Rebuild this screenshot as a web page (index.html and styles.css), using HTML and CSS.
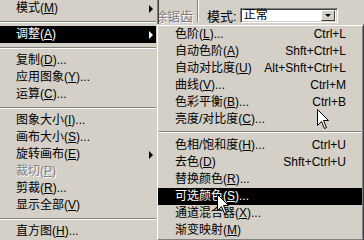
FILE: index.html
```html
<!DOCTYPE html>
<html lang="zh-CN">
<head>
  <meta charset="utf-8"/>
  <title>调整菜单</title>
  <link rel="stylesheet" href="styles.css">
</head>
<body>
  <div class="options-bar">
    <span class="opt-label disabled">消除锯齿</span>
    <span class="vsep"></span>
    <span class="opt-label">模式:</span>
    <div class="combo">
      <span class="combo-text">正常</span>
      <span class="combo-btn"><span class="tri-down"></span></span>
    </div>
  </div>

  <!-- image menu -->
  <div class="menu main-menu">
    <div class="item"><span class="label">模式(<u>M</u>)</span><span class="arrow"></span></div>
    <div class="sep"></div>
    <div class="item active"><span class="label">调整(<u>A</u>)</span><span class="arrow"></span></div>
    <div class="sep"></div>
    <div class="item"><span class="label">复制(<u>D</u>)...</span></div>
    <div class="item"><span class="label">应用图象(<u>Y</u>)...</span></div>
    <div class="item"><span class="label">运算(<u>C</u>)...</span></div>
    <div class="sep"></div>
    <div class="item"><span class="label">图象大小(<u>I</u>)...</span></div>
    <div class="item"><span class="label">画布大小(<u>S</u>)...</span></div>
    <div class="item"><span class="label">旋转画布(<u>E</u>)</span><span class="arrow"></span></div>
    <div class="item disabled"><span class="label">裁切(<u>P</u>)</span></div>
    <div class="item"><span class="label">剪裁(<u>R</u>)...</span></div>
    <div class="item"><span class="label">显示全部(<u>V</u>)</span></div>
    <div class="sep"></div>
    <div class="item"><span class="label">直方图(<u>H</u>)...</span></div>
  </div>

  <!-- adjustments submenu -->
  <div class="menu sub-menu">
    <div class="item"><span class="label">色阶(<u>L</u>)...</span><span class="key">Ctrl+L</span></div>
    <div class="item"><span class="label">自动色阶(<u>A</u>)</span><span class="key">Shft+Ctrl+L</span></div>
    <div class="item"><span class="label">自动对比度(<u>U</u>)</span><span class="key">Alt+Shft+Ctrl+L</span></div>
    <div class="item"><span class="label">曲线(<u>V</u>)...</span><span class="key">Ctrl+M</span></div>
    <div class="item"><span class="label">色彩平衡(<u>B</u>)...</span><span class="key">Ctrl+B</span></div>
    <div class="item"><span class="label">亮度/对比度(<u>C</u>)...</span></div>
    <div class="sep"></div>
    <div class="item"><span class="label">色相/饱和度(<u>H</u>)...</span><span class="key">Ctrl+U</span></div>
    <div class="item"><span class="label">去色(<u>D</u>)</span><span class="key">Shft+Ctrl+U</span></div>
    <div class="item"><span class="label">替换颜色(<u>R</u>)...</span></div>
    <div class="item active"><span class="label">可选颜色(<u>S</u>)...</span></div>
    <div class="item"><span class="label">通道混合器(<u>X</u>)...</span></div>
    <div class="item"><span class="label">渐变映射(<u>M</u>)</span></div>
  </div>

  <svg class="cursor cursor-one" width="13" height="21" viewBox="0 0 13 21">
    <path d="M0.5 0.5 V16.5 L4.5 12.5 L7.5 19.5 L9.5 18.5 L6.5 11.5 H11.5 Z" fill="#fff" stroke="#000" stroke-width="1"/>
  </svg>
  <svg class="cursor cursor-two" width="13" height="21" viewBox="0 0 13 21">
    <path d="M0.5 0.5 V16.5 L4.5 12.5 L7.5 19.5 L9.5 18.5 L6.5 11.5 H11.5 Z" fill="#fff" stroke="#000" stroke-width="1"/>
  </svg>
</body>
</html>
```

FILE: styles.css
```css
body {
  margin: 0;
  width: 364px;
  height: 240px;
  overflow: hidden;
  position: relative;
  background-color: #d4d0c8;
  font-family: "Liberation Sans", "Noto Sans CJK SC", sans-serif;
  font-size: 12px;
  color: #000;
}

u {
  text-decoration: underline;
  text-underline-offset: 1px;
}

.options-bar {
  height: 30px;
  display: flex;
  align-items: center;
  padding-left: 141px;
}

.opt-label {
  white-space: nowrap;
  font-size: 13px;
}

.disabled,
.disabled .label {
  color: #808080;
  text-shadow: 1px 1px 0 #fff;
}

.vsep {
  margin-left: 4px;
  width: 0;
  height: 22px;
  border-left: 1px solid #808080;
  border-right: 1px solid #fff;
  align-self: flex-start;
  margin-right: 8px;
}

.combo {
  margin-left: 3px;
  width: 98px;
  height: 15px;
  box-sizing: border-box;
  background-color: #fff;
  border-top: 1px solid #808080;
  border-left: 1px solid #808080;
  border-bottom: 1px solid #fff;
  border-right: 1px solid #fff;
  box-shadow: inset 1px 1px 0 #404040, inset -1px -1px 0 #d4d0c8;
  display: flex;
  align-items: center;
  justify-content: space-between;
  padding: 0 2px 0 3px;
}

.combo-text {
  line-height: 13px;
}

.combo-btn {
  width: 14px;
  height: 11px;
  box-sizing: border-box;
  background-color: #d4d0c8;
  border-top: 1px solid #fff;
  border-left: 1px solid #fff;
  border-bottom: 1px solid #404040;
  border-right: 1px solid #404040;
  display: flex;
  align-items: center;
  justify-content: center;
}

.tri-down {
  width: 0;
  height: 0;
  border-left: 3px solid transparent;
  border-right: 3px solid transparent;
  border-top: 3px solid #000;
}

.menu {
  position: absolute;
  background-color: #d4d0c8;
  box-sizing: border-box;
}

.main-menu {
  left: 0;
  top: 0;
  width: 159px;
  padding-right: 1px;
  border-right: 1px solid #404040;
  box-shadow: inset -1px 0 0 #808080;
}

.sub-menu {
  left: 156px;
  top: 24px;
  width: 208px;
  padding: 1px;
  border: 1px solid;
  border-color: #d4d0c8 #404040 #404040 #d4d0c8;
  box-shadow: inset 1px 1px 0 #fff, inset -1px -1px 0 #808080;
}

.item {
  height: 17px;
  line-height: 17px;
  display: flex;
  align-items: center;
  padding-left: 16px;
  white-space: nowrap;
}

.sub-menu .item {
  padding-left: 17px;
  padding-right: 16px;
}

.label {
  flex: 1;
}

.item.active {
  background-color: #000;
  color: #fff;
}

.arrow {
  width: 0;
  height: 0;
  margin-right: 4px;
  border-top: 4px solid transparent;
  border-bottom: 4px solid transparent;
  border-left: 4px solid #000;
}

.item.active .arrow {
  border-left-color: #fff;
}

.sep {
  padding-top: 4px;
  height: 5px;
  margin-right: 1px;
}

.sep::before {
  content: "";
  display: block;
  border-top: 1px solid #808080;
  border-bottom: 1px solid #fff;
}

.sub-menu .sep {
  padding-top: 3px;
  height: 6px;
  margin: 0 1px;
}

.cursor {
  position: absolute;
}

.cursor-one {
  left: 317px;
  top: 109px;
}

.cursor-two {
  left: 217px;
  top: 194px;
}
```
